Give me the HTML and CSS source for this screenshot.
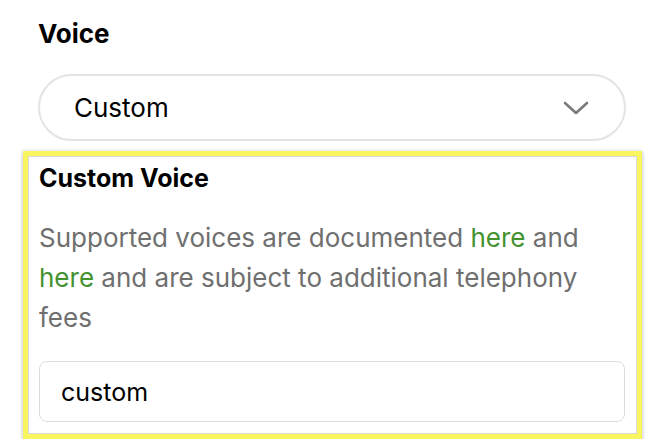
FILE: index.html
```html
<!DOCTYPE html>
<html lang="en">
<head>
    <meta charset="UTF-8">
    <meta name="viewport" content="width=device-width, initial-scale=1.0">
    <title>Voice settings</title>
    <link rel="stylesheet" href="styles.css">
</head>
<body>
    <div class="panel">
        <div class="field">
            <label class="field-label">Voice</label>
            <div class="select">
                <span class="select-value">Custom</span>
                <svg class="chevron" width="28" height="16" viewBox="0 0 28 16">
                    <path d="M3 3 L14 13 L25 3" fill="none" stroke="#7a7a7a" stroke-width="2.6" stroke-linecap="round" stroke-linejoin="round"/>
                </svg>
            </div>
        </div>

        <div class="custom-box">
            <h2 class="box-title">Custom Voice</h2>
            <p class="box-help">Supported voices are documented <a href="#">here</a> and <a href="#">here</a> and are subject to additional telephony fees</p>
            <div class="text-input">custom</div>
        </div>
    </div>
</body>
</html>
```

FILE: styles.css
```css
body {
    margin: 0;
    background-color: #ffffff;
    font-family: Inter, "Noto Sans", sans-serif;
    color: #000;
}
.panel {
    padding: 18px 24px 0 23px;
}
.field {
    padding: 0 16px 0 15px;
}
.field-label {
    display: block;
    font-size: 26px;
    line-height: 32px;
    font-weight: 700;
}
.select {
    margin-top: 24px;
    height: 63px;
    border: 2px solid #e4e4e4;
    border-radius: 34px;
    display: flex;
    align-items: center;
    justify-content: space-between;
    padding: 0 34px 0 34px;
}
.select-value {
    font-size: 26px;
}
.chevron {
    display: block;
}
.custom-box {
    margin-top: 10px;
    border: 5px solid #f8f55e;
    box-shadow: inset 0 0 0 1px #d8d8d8, 0 1px 4px rgba(0,0,0,0.3);
    padding: 7px 12px 12px 11px;
}
.box-title {
    margin: 0;
    font-size: 25px;
    line-height: 30px;
    font-weight: 700;
}
.box-help {
    margin: 25px 0 0 0;
    font-size: 26px;
    line-height: 40px;
    color: #6f6f6f;
}
.box-help a {
    color: #44922f;
    text-decoration: none;
}
.text-input {
    margin-top: 23px;
    height: 59px;
    border: 1px solid #dcdcdc;
    border-radius: 8px;
    padding: 0 21px;
    display: flex;
    align-items: center;
    font-size: 25px;
}
```
